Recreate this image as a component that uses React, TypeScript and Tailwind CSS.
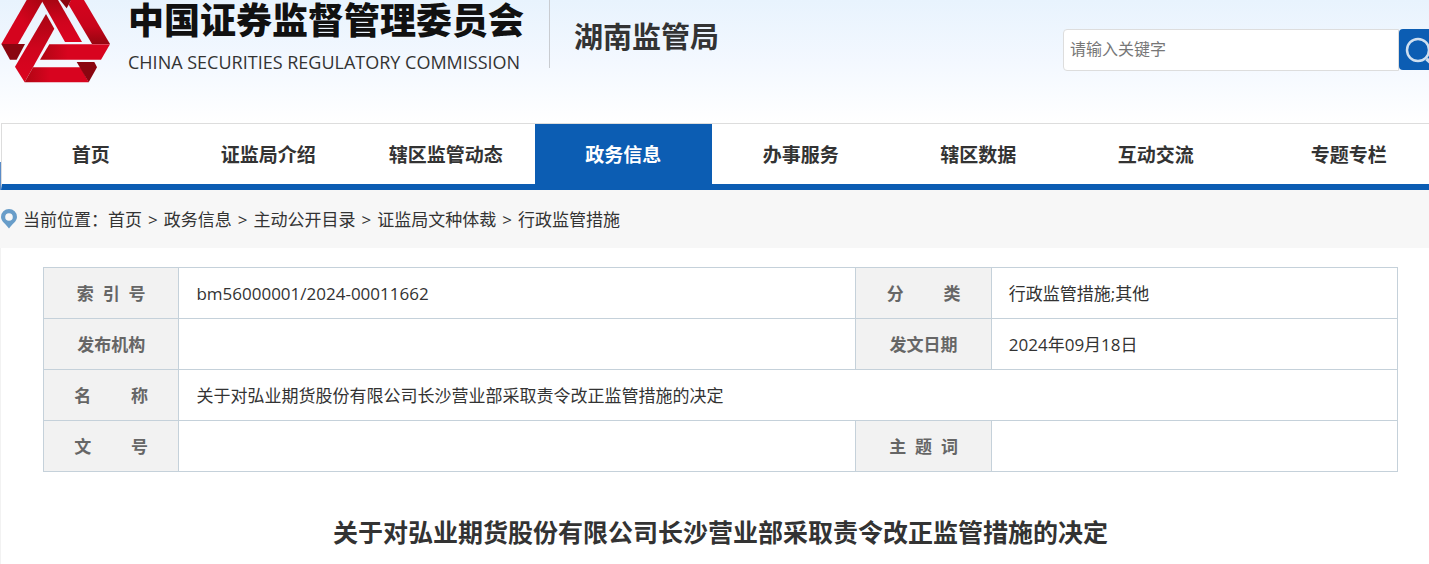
import { Fragment } from 'react';
import { clsx } from 'clsx';

const NAV_ITEMS = [
  '首页',
  '证监局介绍',
  '辖区监管动态',
  '政务信息',
  '办事服务',
  '辖区数据',
  '互动交流',
  '专题专栏',
];

const BREADCRUMBS = [
  '首页',
  '政务信息',
  '主动公开目录',
  '证监局文种体裁',
  '行政监管措施',
];

const DOC_TITLE = '关于对弘业期货股份有限公司长沙营业部采取责令改正监管措施的决定';

function Emblem() {
  return (
    <svg viewBox="0 0 333 252" className="h-[84px] w-[111px] shrink-0" aria-hidden="true">
      <defs>
        <linearGradient id="strandDown" x1="0" y1="0" x2="0" y2="1">
          <stop offset="0" stopColor="#a80512" />
          <stop offset="0.5" stopColor="#cf041d" />
          <stop offset="1" stopColor="#dc0420" />
        </linearGradient>
        <linearGradient id="strandUp" x1="0" y1="0" x2="0" y2="1">
          <stop offset="0" stopColor="#d5041e" />
          <stop offset="0.6" stopColor="#c8041b" />
          <stop offset="1" stopColor="#960510" />
        </linearGradient>
        <linearGradient id="strandLeft" x1="1" y1="0" x2="0" y2="1">
          <stop offset="0" stopColor="#a80512" />
          <stop offset="0.5" stopColor="#d5041e" />
        </linearGradient>
        <linearGradient id="strandSide" x1="0" y1="0" x2="1" y2="0">
          <stop offset="0" stopColor="#b00513" />
          <stop offset="0.4" stopColor="#d8041f" />
        </linearGradient>
      </defs>
      <polygon points="80,0 130,0 54,132 4,132" fill="url(#strandLeft)" />
      <polygon points="4,132 75,132 50,179 30,179" fill="#8a0510" />
      <polygon points="124,0 174,0 246,126 195,126" fill="url(#strandDown)" />
      <polygon points="180,0 214,0 200,25" fill="#8a0510" />
      <polygon points="213,0 252,0 330,132 276,132 206,14" fill="url(#strandUp)" />
      <polygon points="148,133 330,133 303,179 120,179" fill="url(#strandSide)" />
      <polygon points="138,42 163,86 74,247 45,200" fill="url(#strandDown)" />
      <polygon points="99,202 242,202 266,247 74,247" fill="url(#strandSide)" />
      <polygon points="230,186 283,186 291,202 266,247" fill="#8a0510" />
    </svg>
  );
}

function SiteHeader() {
  return (
    <header className="flex h-[123px] items-start justify-between bg-linear-to-b from-[#e8f3fd] via-[#f3f8ff] to-white">
      <div className="flex items-start">
        <Emblem />
        <div className="ml-[17px] whitespace-nowrap text-[#111]">
          <p className="text-[36px] leading-[42px] font-black">中国证券监督管理委员会</p>
          <p className="mt-1.5 text-[18px] leading-7 text-[#333]">
            CHINA SECURITIES REGULATORY COMMISSION
          </p>
        </div>
        <h1 className="ml-[25px] h-[68px] border-l border-[#c9ccd1] pt-[17px] pl-6 text-[29px] leading-10 font-bold whitespace-nowrap">
          湖南监管局
        </h1>
      </div>
      <form className="mt-[29px] flex" role="search">
        <input
          type="text"
          aria-label="搜索"
          placeholder="请输入关键字"
          className="h-[42px] w-[336px] rounded-l border border-[#ddd] bg-white px-1.5 pb-0.5 text-base placeholder:text-[#777]"
        />
        <button
          type="button"
          aria-label="搜索"
          className="h-[41px] w-[30px] overflow-hidden rounded-l bg-[#0c5db3] pl-1.5"
        >
          <svg viewBox="0 0 30 30" className="h-[30px] w-[30px] max-w-none" fill="none" stroke="#cfdff0">
            <circle cx="13" cy="15" r="11" strokeWidth="2.5" />
            <path d="M21.500 24l7 6" strokeWidth="3.5" />
          </svg>
        </button>
      </form>
    </header>
  );
}

function MainNav() {
  return (
    <nav className="relative ml-px border-t border-b-6 border-l border-t-[#ddd] border-b-[#0c5db3] border-l-[#ddd] bg-white">
      <span className="absolute -bottom-1.5 -left-0.5 h-7 w-px bg-[#5b8cc8]" />
      <ul className="grid grid-cols-[repeat(7,12.44%)_1fr]">
        {NAV_ITEMS.map((item, i) => (
          <li key={item} className={clsx(i === NAV_ITEMS.length - 1 && 'pl-6')}>
            <a
              href="#"
              className={clsx(
                'block h-[60px] text-center text-[19px] leading-[62px] font-bold whitespace-nowrap',
                item === '政务信息' && 'bg-[#0c5db3] text-white',
              )}
            >
              {item}
            </a>
          </li>
        ))}
      </ul>
    </nav>
  );
}

function Breadcrumb() {
  return (
    <div className="flex h-[58px] items-center bg-[#f7f7f7] pl-px text-[17px] leading-6 whitespace-nowrap">
      <svg viewBox="0 0 16 20" className="h-5 w-4" aria-hidden="true">
        <path
          fillRule="evenodd"
          fill="#689dc9"
          d="M8 0a8 8 0 0 1 8 8c0 4.500-5 7-8 11.500C5 15 0 12.500 0 8a8 8 0 0 1 8-8zm0 4.200a3.800 3.800 0 1 0 0 7.600a3.800 3.800 0 0 0 0-7.600z"
        />
      </svg>
      <div className="ml-1.5 flex pt-0.5">
        <span>当前位置：</span>
        {BREADCRUMBS.map((crumb, i) => (
          <Fragment key={crumb}>
            {i > 0 && <span className="mx-1.5">&gt;</span>}
            <a href="#">{crumb}</a>
          </Fragment>
        ))}
      </div>
    </div>
  );
}

const labelClass = 'border border-[#c5d1da] bg-[#f2f2f2] pt-0.5 font-bold text-[#666] whitespace-pre';
const valueClass = 'border border-[#c5d1da] px-[17px] pt-0.5 text-left';

function DocInfo() {
  return (
    <table className="w-full table-fixed border-collapse text-[17px]">
      <colgroup>
        <col className="w-[10%]" />
        <col className="w-[50%]" />
        <col className="w-[10%]" />
        <col className="w-[30%]" />
      </colgroup>
      <tbody>
        <tr className="h-[51px]">
          <th scope="row" className={labelClass}>{'索  引  号'}</th>
          <td className={valueClass}>bm56000001/2024-00011662</td>
          <th scope="row" className={labelClass}>{'分         类'}</th>
          <td className={valueClass}>行政监管措施;其他</td>
        </tr>
        <tr className="h-[51px]">
          <th scope="row" className={labelClass}>发布机构</th>
          <td className={valueClass} />
          <th scope="row" className={labelClass}>发文日期</th>
          <td className={valueClass}>2024年09月18日</td>
        </tr>
        <tr className="h-[51px]">
          <th scope="row" className={labelClass}>{'名         称'}</th>
          <td colSpan={3} className={valueClass}>{DOC_TITLE}</td>
        </tr>
        <tr className="h-[51px]">
          <th scope="row" className={labelClass}>{'文         号'}</th>
          <td className={valueClass} />
          <th scope="row" className={labelClass}>{'主  题  词'}</th>
          <td className={valueClass} />
        </tr>
      </tbody>
    </table>
  );
}

export default function App() {
  return (
    <div className="overflow-x-hidden bg-white font-['Open_Sans','Noto_Sans_CJK_SC',sans-serif] text-[#333]">
      <SiteHeader />
      <MainNav />
      <Breadcrumb />
      <main className="border-l border-[#f2f2f2] pt-[19px] pr-[31px] pl-[42px]">
        <DocInfo />
        <h2 className="mt-10 pb-3 text-center text-[25px] leading-10 font-bold">{DOC_TITLE}</h2>
      </main>
    </div>
  );
}
